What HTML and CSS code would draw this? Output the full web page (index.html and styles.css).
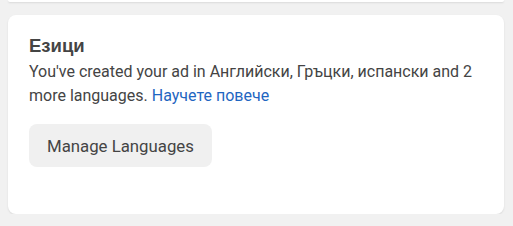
FILE: index.html
```html
<!DOCTYPE html>
<html lang="bg">
  <head>
    <meta charset="UTF-8" />
    <title>Езици</title>
    <link rel="stylesheet" href="styles.css">
  </head>
  <body>
    <div class="page">
      <div class="card card-prev"></div>

      <div class="card languages">
        <div class="title">Езици</div>
        <p class="text">
          You've created your ad in Английски, Гръцки, испански and 2 more languages.
          <a href="#" class="link">Научете повече</a>
        </p>
        <button type="button" class="button">Manage Languages</button>
      </div>
    </div>
  </body>
</html>
```

FILE: styles.css
```css
body {
  margin: 0;
  padding: 0;
  background-color: #f1f1f1;
  font-family: Roboto, "Noto Sans", sans-serif;
  color: #444;
}

.page {
  display: flex;
  flex-direction: column;
  gap: 13px;
  padding: 0 9px 0 8px;
}

.card {
  background-color: #fff;
  border-radius: 8px;
  box-shadow: 0 1px 2px rgba(0, 0, 0, 0.1);
}

.card-prev {
  height: 2px;
  border-radius: 0 0 8px 8px;
}

.languages {
  padding: 20px 21px 47px;
}

.title {
  font-family: "Liberation Sans", Arial, sans-serif;
  font-size: 18.5px;
  font-weight: bold;
  line-height: 22px;
  color: #444;
}

.text {
  margin: 3px 0 0;
  font-size: 16px;
  line-height: 24px;
}

.link {
  color: #1f66c1;
  text-decoration: none;
}

.button {
  margin-top: 16px;
  height: 43px;
  padding: 0 18px;
  border: none;
  border-radius: 8px;
  background-color: #f0f0f0;
  font-family: Roboto, "Noto Sans", sans-serif;
  font-size: 16.8px;
  color: #444;
  cursor: pointer;
}
```
